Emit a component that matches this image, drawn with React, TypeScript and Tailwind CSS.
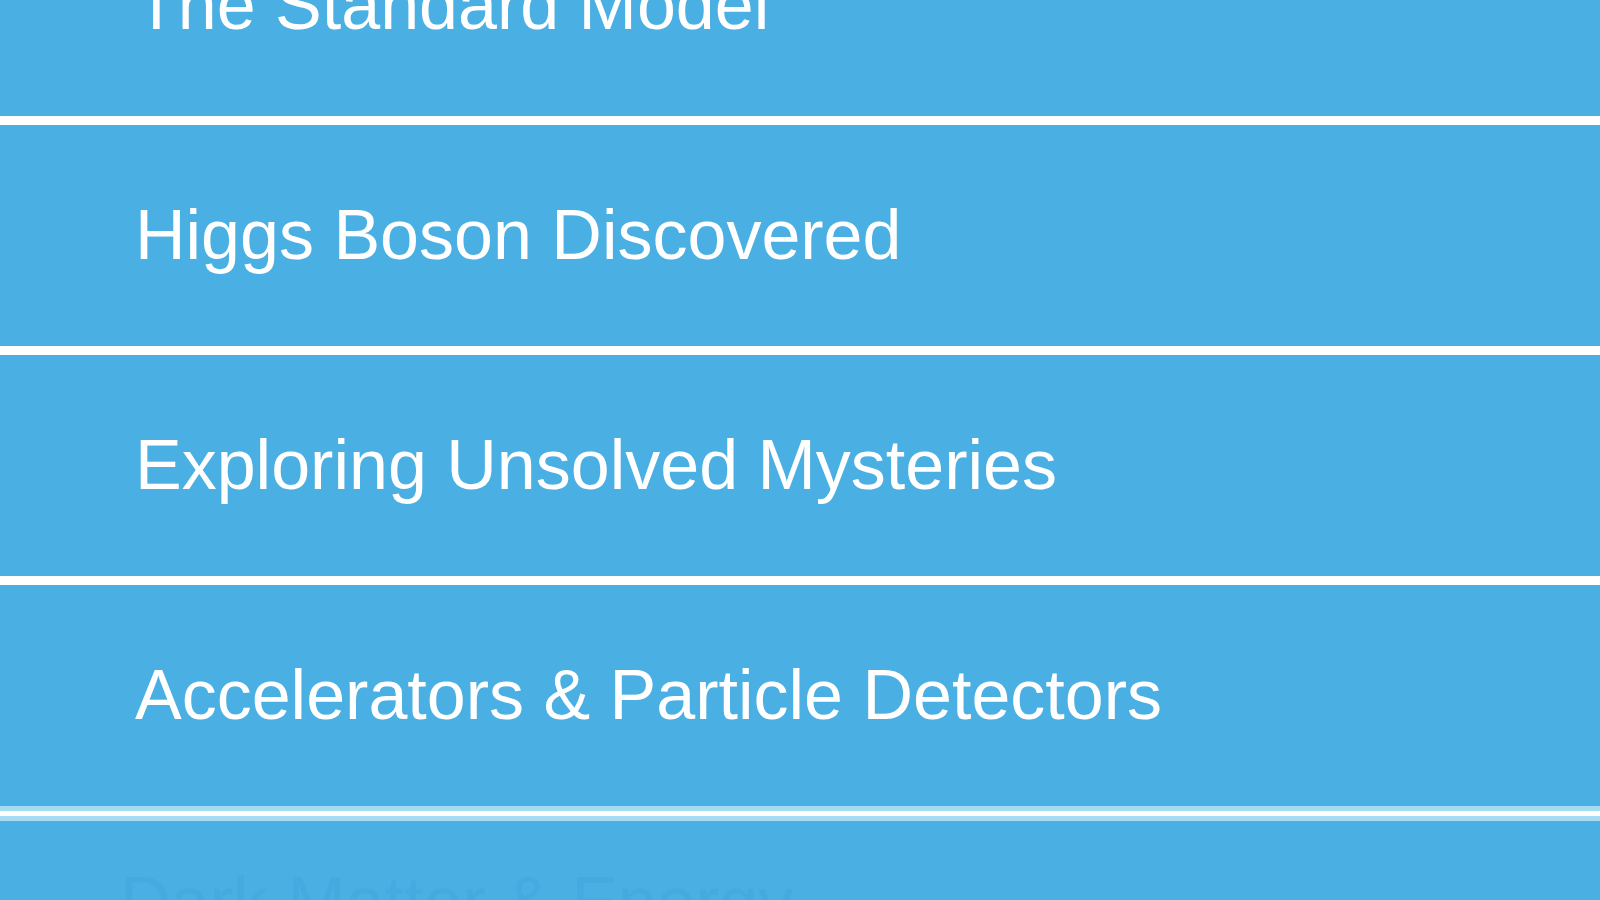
import React from "react";

const topics = [
  "The Standard Model",
  "Higgs Boson Discovered",
  "Exploring Unsolved Mysteries",
  "Accelerators & Particle Detectors",
];

export default function App() {
  return (
    <main
      className="h-[900px] overflow-hidden bg-[#4aafe2]"
      style={{ fontFamily: '"Liberation Sans", Arial, sans-serif' }}
    >
      {/* list is scrolled so the first topic sits partly above the fold */}
      <ul className="-mt-[105px]">
        {topics.map((t, i) => (
          <li key={t}>
            <a
              href="#"
              className="flex h-[221px] items-center pl-[135px] text-[70px] text-white"
            >
              {t}
            </a>
            {i < topics.length - 1 ? (
              <div className="h-[9px] bg-white" />
            ) : (
              <div className="flex h-[15px] flex-col">
                <div className="h-[5px] bg-[#a6dcf3]" />
                <div className="h-[5px] bg-white" />
                <div className="h-[5px] bg-[#a6dcf3]" />
              </div>
            )}
          </li>
        ))}
        <li className="pl-[120px] pt-[29px]">
          <span className="text-[70px] text-[#45aadf]">Dark Matter &amp; Energy</span>
        </li>
      </ul>
    </main>
  );
}
